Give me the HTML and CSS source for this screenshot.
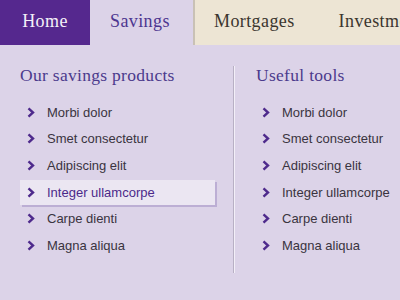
FILE: index.html
```html
<!DOCTYPE html>
<html>
<head>
<meta charset="utf-8">
<link rel="stylesheet" href="styles.css">
</head>
<body>
<nav class="tabs">
  <a class="tab tab-home">Home</a>
  <a class="tab tab-active">Savings</a>
  <div class="tab-rest">
    <a class="tab tab-plain">Mortgages</a>
    <a class="tab tab-plain">Investments</a>
  </div>
</nav>
<main class="panel">
  <section class="col col-left">
    <h2 class="col-title">Our savings products</h2>
    <ul class="links">
      <li class="link"><svg class="chev" viewBox="0 0 8 11"><path d="M1.5 1.3 L6 5.5 L1.5 9.7"/></svg>Morbi dolor</li>
      <li class="link"><svg class="chev" viewBox="0 0 8 11"><path d="M1.5 1.3 L6 5.5 L1.5 9.7"/></svg>Smet consectetur</li>
      <li class="link"><svg class="chev" viewBox="0 0 8 11"><path d="M1.5 1.3 L6 5.5 L1.5 9.7"/></svg>Adipiscing elit</li>
      <li class="link link-hover"><svg class="chev" viewBox="0 0 8 11"><path d="M1.5 1.3 L6 5.5 L1.5 9.7"/></svg>Integer ullamcorpe</li>
      <li class="link"><svg class="chev" viewBox="0 0 8 11"><path d="M1.5 1.3 L6 5.5 L1.5 9.7"/></svg>Carpe dienti</li>
      <li class="link"><svg class="chev" viewBox="0 0 8 11"><path d="M1.5 1.3 L6 5.5 L1.5 9.7"/></svg>Magna aliqua</li>
    </ul>
  </section>
  <div class="divider"></div>
  <section class="col col-right">
    <h2 class="col-title">Useful tools</h2>
    <ul class="links">
      <li class="link"><svg class="chev" viewBox="0 0 8 11"><path d="M1.5 1.3 L6 5.5 L1.5 9.7"/></svg>Morbi dolor</li>
      <li class="link"><svg class="chev" viewBox="0 0 8 11"><path d="M1.5 1.3 L6 5.5 L1.5 9.7"/></svg>Smet consectetur</li>
      <li class="link"><svg class="chev" viewBox="0 0 8 11"><path d="M1.5 1.3 L6 5.5 L1.5 9.7"/></svg>Adipiscing elit</li>
      <li class="link"><svg class="chev" viewBox="0 0 8 11"><path d="M1.5 1.3 L6 5.5 L1.5 9.7"/></svg>Integer ullamcorpe</li>
      <li class="link"><svg class="chev" viewBox="0 0 8 11"><path d="M1.5 1.3 L6 5.5 L1.5 9.7"/></svg>Carpe dienti</li>
      <li class="link"><svg class="chev" viewBox="0 0 8 11"><path d="M1.5 1.3 L6 5.5 L1.5 9.7"/></svg>Magna aliqua</li>
    </ul>
  </section>
</main>
</body>
</html>
```

FILE: styles.css
```css
html, body {
  margin: 0;
  padding: 0;
  width: 400px;
  height: 300px;
  overflow: hidden;
  background: #dcd3e8;
}

.tabs {
  display: flex;
  height: 45px;
  font-family: "Liberation Serif", serif;
  font-size: 18px;
  letter-spacing: 0.4px;
  white-space: nowrap;
}

.tab {
  display: flex;
  align-items: center;
  box-sizing: border-box;
  height: 45px;
  padding-bottom: 2px;
}

.tab-home {
  width: 90px;
  justify-content: center;
  background: #55288e;
  color: #f4f0f8;
}

.tab-active {
  width: 103px;
  padding-left: 20px;
  background: #dcd3e8;
  color: #4d3690;
}

.tab-rest {
  flex: 1;
  display: flex;
  background: #ede5d4;
  border-left: 2px solid #c9c1b5;
  padding-left: 19px;
  gap: 44px;
  overflow: hidden;
}

.tab-plain {
  color: #3b352e;
}

.panel {
  display: flex;
  padding: 20px 0 0 20px;
}

.col-left {
  width: 195px;
}

.divider {
  width: 1px;
  height: 207px;
  margin: 1px 0 0 18px;
  background: #b8b0c4;
  border-right: 1px solid #f3eff8;
}

.col-right {
  padding-left: 21px;
}

.col-title {
  margin: 0 0 14px 0;
  font-family: "Liberation Serif", serif;
  font-weight: normal;
  font-size: 17.5px;
  letter-spacing: 0.3px;
  line-height: 20px;
  color: #4b3a8c;
}

.links {
  list-style: none;
  margin: 0;
  padding: 0;
}

.link {
  display: flex;
  align-items: center;
  height: 26.6px;
  font-family: "Liberation Sans", Arial, sans-serif;
  font-size: 13px;
  color: #3a3440;
  box-sizing: border-box;
}

.chev {
  width: 8px;
  height: 11px;
  margin: 0 12px 0 7px;
  flex: none;
  fill: none;
  stroke: #4e2a8c;
  stroke-width: 2.4;
  stroke-linecap: butt;
  stroke-linejoin: miter;
}

.col-right .chev {
  margin-left: 6px;
}

.link-hover {
  height: 25px;
  margin: 1px 0 0.6px 0;
  background: #ebe6f2;
  color: #4b2a8a;
  box-shadow: 2px 2px 0 #bcaed4;
}
```
